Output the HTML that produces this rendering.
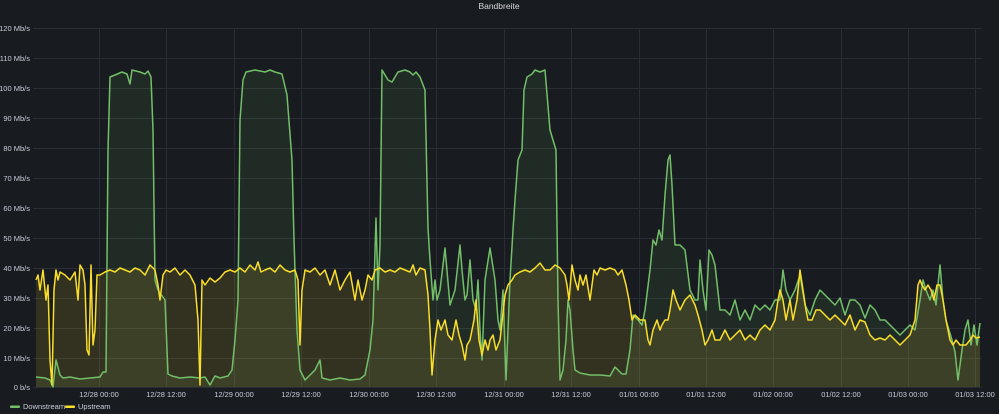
<!DOCTYPE html>
<html><head><meta charset="utf-8"><style>
body{margin:0;background:#181b1f;width:999px;height:414px;overflow:hidden;font-family:"Liberation Sans",sans-serif}
svg{display:block}
text{font-family:"Liberation Sans",sans-serif;fill:#ccccdc;font-size:7.5px}
</style></head><body>
<svg width="999" height="414" viewBox="0 0 999 414">
<rect width="999" height="414" fill="#181b1f"/>
<text x="499" y="9" text-anchor="middle" style="font-size:8.5px;fill:#d8d9da">Bandbreite</text>
<g stroke="#2a2d33" stroke-width="1">
<line x1="33" y1="28.5" x2="982" y2="28.5"/><line x1="33" y1="58.5" x2="982" y2="58.5"/><line x1="33" y1="88.5" x2="982" y2="88.5"/><line x1="33" y1="118.5" x2="982" y2="118.5"/><line x1="33" y1="148.5" x2="982" y2="148.5"/><line x1="33" y1="178.5" x2="982" y2="178.5"/><line x1="33" y1="208.5" x2="982" y2="208.5"/><line x1="33" y1="238.5" x2="982" y2="238.5"/><line x1="33" y1="268.5" x2="982" y2="268.5"/><line x1="33" y1="298.5" x2="982" y2="298.5"/><line x1="33" y1="328.5" x2="982" y2="328.5"/><line x1="33" y1="358.5" x2="982" y2="358.5"/><line x1="33" y1="387.5" x2="982" y2="387.5"/>
<line x1="99.5" y1="28" x2="99.5" y2="388"/><line x1="166.5" y1="28" x2="166.5" y2="388"/><line x1="234.5" y1="28" x2="234.5" y2="388"/><line x1="301.5" y1="28" x2="301.5" y2="388"/><line x1="369.5" y1="28" x2="369.5" y2="388"/><line x1="436.5" y1="28" x2="436.5" y2="388"/><line x1="504.5" y1="28" x2="504.5" y2="388"/><line x1="571.5" y1="28" x2="571.5" y2="388"/><line x1="639.5" y1="28" x2="639.5" y2="388"/><line x1="706.5" y1="28" x2="706.5" y2="388"/><line x1="773.5" y1="28" x2="773.5" y2="388"/><line x1="841.5" y1="28" x2="841.5" y2="388"/><line x1="908.5" y1="28" x2="908.5" y2="388"/><line x1="975.5" y1="28" x2="975.5" y2="388"/>
</g>
<g text-anchor="end">
<text x="30" y="31">120 Mb/s</text><text x="30" y="61">110 Mb/s</text><text x="30" y="91">100 Mb/s</text><text x="30" y="121">90 Mb/s</text><text x="30" y="151">80 Mb/s</text><text x="30" y="181">70 Mb/s</text><text x="30" y="211">60 Mb/s</text><text x="30" y="241">50 Mb/s</text><text x="30" y="271">40 Mb/s</text><text x="30" y="301">30 Mb/s</text><text x="30" y="331">20 Mb/s</text><text x="30" y="361">10 Mb/s</text><text x="30" y="390">0 b/s</text>
</g>
<g text-anchor="middle">
<text x="99" y="397">12/28 00:00</text><text x="166" y="397">12/28 12:00</text><text x="234" y="397">12/29 00:00</text><text x="301" y="397">12/29 12:00</text><text x="369" y="397">12/30 00:00</text><text x="436" y="397">12/30 12:00</text><text x="504" y="397">12/31 00:00</text><text x="571" y="397">12/31 12:00</text><text x="639" y="397">01/01 00:00</text><text x="706" y="397">01/01 12:00</text><text x="773" y="397">01/02 00:00</text><text x="841" y="397">01/02 12:00</text><text x="908" y="397">01/03 00:00</text><text x="975" y="397">01/03 12:00</text>
</g>
<defs>
<polyline id="g" points="36,377 45,378 50,380 53,387 56,360 60,375 63,378 70,377 80,379 90,378 100,377 103,372 106,372 108,150 110,77 115,75 122,72 127,74 130,84 132,70 140,72 145,74 148,71 151,77 153,130 155,280 158,290 165,300 168,374 172,376 180,378 190,377 200,378 205,377 210,385 215,376 220,378 228,376 232,370 235,340 238,300 240,120 243,80 246,72 255,70 265,72 270,70 275,72 282,74 287,95 292,160 294,240 297,330 300,370 305,380 310,375 315,370 320,360 322,378 330,380 340,378 350,380 360,379 365,375 370,350 373,320 376,218 378,290 380,245 382,70 385,75 388,80 392,82 398,72 405,70 410,72 413,75 416,72 420,77 425,90 428,228 430,260 433,300 435,280 437,300 440,290 445,248 450,305 455,290 460,245 462,270 465,300 467,295 470,260 473,300 476,310 478,280 480,330 482,360 485,280 490,248 495,280 498,320 500,330 503,290 506,380 510,280 513,230 515,200 518,160 522,150 524,90 527,77 532,74 535,70 540,72 545,70 550,130 553,140 556,150 558,300 560,380 563,370 566,340 568,300 570,310 573,350 575,370 580,373 590,375 600,375 610,376 615,367 618,370 622,374 626,374 630,350 633,315 638,320 642,325 645,310 650,270 653,240 656,245 659,230 662,240 665,195 668,160 670,155 672,185 675,245 680,245 685,250 690,290 695,300 698,300 700,260 703,290 706,310 709,250 712,255 715,265 720,310 725,310 730,315 735,300 740,320 745,310 750,320 755,305 760,310 765,305 770,310 775,300 780,300 783,270 786,290 790,300 795,290 800,275 805,305 810,315 815,300 820,290 825,295 830,300 835,305 840,298 845,315 850,300 855,300 860,305 865,318 870,305 875,310 880,320 885,320 890,325 895,330 900,335 905,330 910,325 915,330 920,300 923,280 926,290 930,300 933,290 936,305 940,265 943,300 946,320 949,330 952,340 955,352 958,380 962,350 965,330 968,320 971,345 974,325 977,345 980,323"/>
<polyline id="y" points="36,280 38,275 40,290 43,270 46,300 48,285 50,360 52,385 54,290 56,270 58,280 60,272 65,275 70,280 75,272 78,300 80,265 83,270 85,285 87,350 89,355 91,265 93,345 95,330 97,275 100,275 105,272 110,270 115,272 120,268 125,270 130,272 135,268 140,270 145,275 150,265 155,270 158,285 160,300 163,275 166,270 170,272 175,268 180,275 185,270 190,275 195,285 198,320 200,385 202,280 205,285 210,278 215,282 220,278 225,272 230,270 235,272 240,268 245,272 250,265 255,270 258,262 261,272 265,270 270,268 275,272 280,265 285,270 290,272 295,270 298,280 300,345 302,290 305,270 310,272 315,268 320,275 325,270 330,285 335,270 340,290 345,280 350,272 355,300 358,280 362,300 365,290 368,275 372,280 375,270 380,268 385,272 390,270 395,272 400,268 405,270 410,272 413,265 416,275 420,268 425,270 428,295 430,330 432,375 435,340 438,320 441,330 445,320 448,335 452,340 456,320 459,335 462,345 465,360 467,345 470,340 472,330 474,320 476,300 479,340 482,355 485,340 488,350 490,340 493,335 496,350 500,340 505,295 508,285 512,280 515,275 520,272 525,270 530,272 535,268 540,263 545,270 550,270 555,265 560,268 565,275 567,285 569,300 572,265 575,280 578,290 580,275 583,285 586,275 590,300 594,270 597,275 600,268 605,270 610,268 615,270 618,275 622,270 626,285 629,300 632,320 635,315 640,320 645,320 648,340 650,345 653,330 657,320 660,330 662,325 665,320 668,320 670,310 673,290 676,300 680,310 685,300 690,295 695,305 698,315 702,330 705,345 708,340 712,330 715,340 720,340 725,330 730,340 735,335 740,330 745,340 750,335 755,340 760,330 765,325 770,330 775,320 778,300 780,290 783,300 786,320 790,300 793,320 797,300 800,270 803,290 806,310 808,320 812,320 816,310 820,310 825,315 830,320 835,315 840,320 845,325 850,315 855,330 860,320 865,322 870,335 875,340 880,338 885,340 890,335 895,340 900,345 905,340 910,335 915,320 918,285 920,280 922,285 925,290 928,285 931,290 934,300 937,285 940,285 943,300 946,320 950,340 953,345 956,340 960,345 963,345 966,345 970,340 973,335 976,338 980,337"/>
</defs>
<polygon fill="rgba(115,191,105,0.1)" points="36,387 36,377 45,378 50,380 53,387 56,360 60,375 63,378 70,377 80,379 90,378 100,377 103,372 106,372 108,150 110,77 115,75 122,72 127,74 130,84 132,70 140,72 145,74 148,71 151,77 153,130 155,280 158,290 165,300 168,374 172,376 180,378 190,377 200,378 205,377 210,385 215,376 220,378 228,376 232,370 235,340 238,300 240,120 243,80 246,72 255,70 265,72 270,70 275,72 282,74 287,95 292,160 294,240 297,330 300,370 305,380 310,375 315,370 320,360 322,378 330,380 340,378 350,380 360,379 365,375 370,350 373,320 376,218 378,290 380,245 382,70 385,75 388,80 392,82 398,72 405,70 410,72 413,75 416,72 420,77 425,90 428,228 430,260 433,300 435,280 437,300 440,290 445,248 450,305 455,290 460,245 462,270 465,300 467,295 470,260 473,300 476,310 478,280 480,330 482,360 485,280 490,248 495,280 498,320 500,330 503,290 506,380 510,280 513,230 515,200 518,160 522,150 524,90 527,77 532,74 535,70 540,72 545,70 550,130 553,140 556,150 558,300 560,380 563,370 566,340 568,300 570,310 573,350 575,370 580,373 590,375 600,375 610,376 615,367 618,370 622,374 626,374 630,350 633,315 638,320 642,325 645,310 650,270 653,240 656,245 659,230 662,240 665,195 668,160 670,155 672,185 675,245 680,245 685,250 690,290 695,300 698,300 700,260 703,290 706,310 709,250 712,255 715,265 720,310 725,310 730,315 735,300 740,320 745,310 750,320 755,305 760,310 765,305 770,310 775,300 780,300 783,270 786,290 790,300 795,290 800,275 805,305 810,315 815,300 820,290 825,295 830,300 835,305 840,298 845,315 850,300 855,300 860,305 865,318 870,305 875,310 880,320 885,320 890,325 895,330 900,335 905,330 910,325 915,330 920,300 923,280 926,290 930,300 933,290 936,305 940,265 943,300 946,320 949,330 952,340 955,352 958,380 962,350 965,330 968,320 971,345 974,325 977,345 980,323 980,387"/>
<polygon fill="rgba(250,222,42,0.12)" points="36,387 36,280 38,275 40,290 43,270 46,300 48,285 50,360 52,385 54,290 56,270 58,280 60,272 65,275 70,280 75,272 78,300 80,265 83,270 85,285 87,350 89,355 91,265 93,345 95,330 97,275 100,275 105,272 110,270 115,272 120,268 125,270 130,272 135,268 140,270 145,275 150,265 155,270 158,285 160,300 163,275 166,270 170,272 175,268 180,275 185,270 190,275 195,285 198,320 200,385 202,280 205,285 210,278 215,282 220,278 225,272 230,270 235,272 240,268 245,272 250,265 255,270 258,262 261,272 265,270 270,268 275,272 280,265 285,270 290,272 295,270 298,280 300,345 302,290 305,270 310,272 315,268 320,275 325,270 330,285 335,270 340,290 345,280 350,272 355,300 358,280 362,300 365,290 368,275 372,280 375,270 380,268 385,272 390,270 395,272 400,268 405,270 410,272 413,265 416,275 420,268 425,270 428,295 430,330 432,375 435,340 438,320 441,330 445,320 448,335 452,340 456,320 459,335 462,345 465,360 467,345 470,340 472,330 474,320 476,300 479,340 482,355 485,340 488,350 490,340 493,335 496,350 500,340 505,295 508,285 512,280 515,275 520,272 525,270 530,272 535,268 540,263 545,270 550,270 555,265 560,268 565,275 567,285 569,300 572,265 575,280 578,290 580,275 583,285 586,275 590,300 594,270 597,275 600,268 605,270 610,268 615,270 618,275 622,270 626,285 629,300 632,320 635,315 640,320 645,320 648,340 650,345 653,330 657,320 660,330 662,325 665,320 668,320 670,310 673,290 676,300 680,310 685,300 690,295 695,305 698,315 702,330 705,345 708,340 712,330 715,340 720,340 725,330 730,340 735,335 740,330 745,340 750,335 755,340 760,330 765,325 770,330 775,320 778,300 780,290 783,300 786,320 790,300 793,320 797,300 800,270 803,290 806,310 808,320 812,320 816,310 820,310 825,315 830,320 835,315 840,320 845,325 850,315 855,330 860,320 865,322 870,335 875,340 880,338 885,340 890,335 895,340 900,345 905,340 910,335 915,320 918,285 920,280 922,285 925,290 928,285 931,290 934,300 937,285 940,285 943,300 946,320 950,340 953,345 956,340 960,345 963,345 966,345 970,340 973,335 976,338 980,337 980,387"/>
<use href="#g" fill="none" stroke="#73bf69" stroke-width="1.5" stroke-linejoin="round"/>
<use href="#y" fill="none" stroke="#fade2a" stroke-width="1.5" stroke-linejoin="round"/>
<rect x="10" y="405.5" width="10" height="2.5" rx="1" fill="#73bf69"/>
<text x="23" y="409">Downstream</text>
<rect x="65" y="405.5" width="10" height="2.5" rx="1" fill="#fade2a"/>
<text x="78" y="409">Upstream</text>
</svg>
</body></html>
